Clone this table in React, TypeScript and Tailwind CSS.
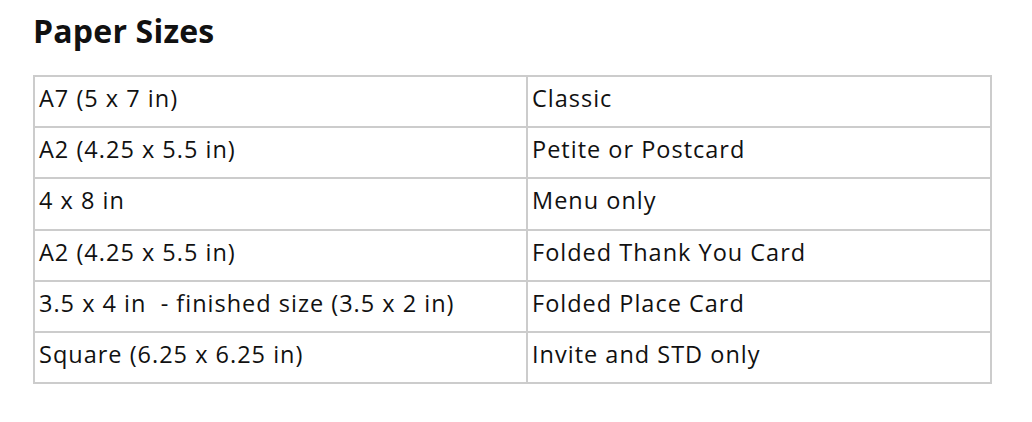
const rows: [string, string][] = [
  ['A7 (5 x 7 in)', 'Classic'],
  ['A2 (4.25 x 5.5 in)', 'Petite or Postcard'],
  ['4 x 8 in', 'Menu only'],
  ['A2 (4.25 x 5.5 in)', 'Folded Thank You Card'],
  ['3.5 x 4 in \u00a0- finished size (3.5 x 2 in)', 'Folded Place Card'],
  ['Square (6.25 x 6.25 in)', 'Invite and STD only'],
];

export default function App() {
  return (
    <div className="w-[1032px] h-[422px] bg-white px-[33px] pt-[11px] text-[#111] font-['Open_Sans',sans-serif]">
      <h2 className="text-[32px] font-bold leading-[40px] tracking-[0.2px]">Paper Sizes</h2>
      <table className="mt-[24px] w-[959px] border-collapse border-2 border-[#cccccc]">
        <tbody>
          {rows.map(([size, use], i) => (
            <tr key={i} className="h-[51.2px]">
              <td className="w-[493px] border-2 border-[#cccccc] px-[4px] pb-[7px] text-[23.5px] leading-[26px] tracking-[1px] align-middle">
                {size}
              </td>
              <td className="border-2 border-[#cccccc] px-[4px] pb-[7px] text-[23.5px] leading-[26px] tracking-[1px] align-middle">
                {use}
              </td>
            </tr>
          ))}
        </tbody>
      </table>
    </div>
  );
}
